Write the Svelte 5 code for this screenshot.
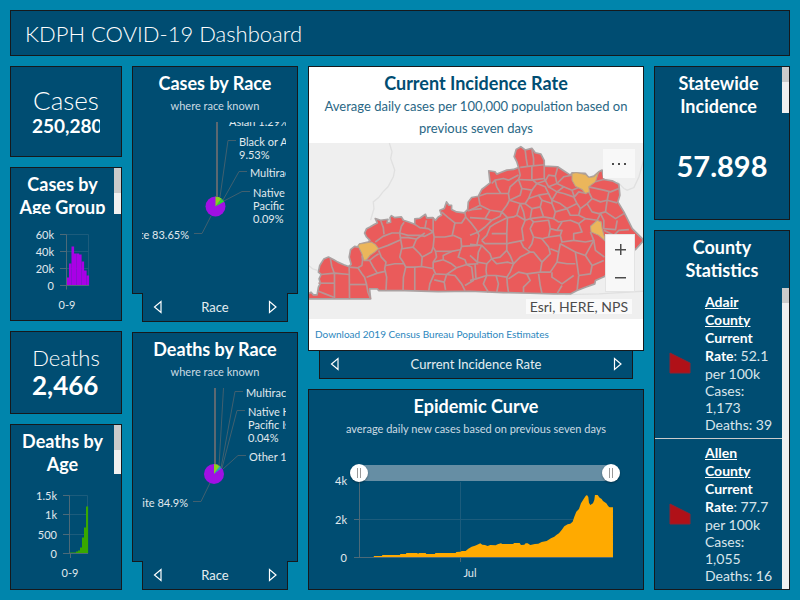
<script>
  const ageCases = [8, 22, 39, 32, 32, 31, 24, 15, 10];
  const ageDeaths = [1, 1, 1, 2, 3, 6, 16, 26, 47];

  const counties = [
    { name: 'Adair', rate: '52.1', cases: '1,173', deaths: '39' },
    { name: 'Allen', rate: '77.7', cases: '1,055', deaths: '16' }
  ];

  const outline =
    'M12 475V460L20 455 27 463 38 463 42 440 48 428 44 415 50 402 42 395 46 375 58 356 72 350 88 358 100 365 118 373 132 378 140 372 134 350 138 328 150 318 162 320 165 311 190 305 196 300 186 290 180 278 186 265 196 260 210 252 218 248 212 235 228 240 250 237 247 248 258 246 256 232 260 226 270 232 290 230 296 240 312 245 330 252 330 236 345 234 362 222 366 233 384 232 392 240 400 230 410 225 405 210 418 205 425 185 432 195 440 195 440 208 455 215 478 218 488 208 490 185 500 172 520 168 530 148 540 140 555 128 551 92 570 95 575 102 585 98 605 90 625 88 640 82 635 65 627 50 633 28 647 20 660 30 680 25 690 38 707 42 717 62 717 78 757 80 775 92 795 105 800 98 840 100 850 112 865 108 880 95 890 90 895 118 920 122 940 132 943 165 937 185 955 215 970 245 980 265 1010 295 1012 303 992 325 960 350 930 380 897 408 870 420 868 430 840 440 815 450 795 460 745 460 675 458 595 456 495 452 400 453 300 450 222 450 218 445 195 445 198 475Z';

  const westLines = [
    '78,355 82,378 90,400', '50,402 90,398 134,402', '90,400 90,475', '42,428 90,428',
    '42,452 62,460 88,470', '134,378 135,475', '135,432 186,432',
    '134,380 160,382 172,400 180,410 186,432 190,455 198,475',
    '172,345 174,360 172,375 160,382', '178,360 195,360 206,380 218,398',
    '195,360 210,348 222,340', '244,392 218,398 186,410',
    '222,330 230,350 244,365 240,385 246,410 244,450',
    '244,375 270,370 298,370 303,380 296,410 295,450', '303,380 330,380 330,450',
    '330,380 350,378 385,384', '212,305 235,288 262,278 285,278', '228,240 236,262 238,282',
    '222,325 250,315 288,298', '285,278 288,298 292,320 285,350 292,360 298,370',
    '285,278 290,258 298,246', '285,278 310,285 345,285 360,288 385,275',
    '288,292 310,292 335,296 325,320 345,340 352,350 350,378', '292,325 325,320',
    '335,296 360,278', '330,252 345,262 370,265 385,275 385,232', '360,265 365,240',
    '385,275 388,290 385,320 380,335 352,350', '388,290 420,290 445,285',
    '385,320 392,332 440,333 465,328', '392,332 395,350 385,365 385,384',
    '385,365 415,358 440,370 455,382', '385,384 392,400 425,402 455,382',
    '388,400 375,430 372,450', '425,402 418,425 422,448', '388,418 418,425',
    '425,402 450,405 470,430 480,450', '410,215 430,232 450,248 442,285',
    '450,248 470,248 482,230 480,216', '488,212 500,208 530,205',
    '445,285 468,295 470,318 465,333', '470,318 520,315',
    '465,333 460,350 480,358 485,372 455,382', '440,333 415,345 415,358',
    '485,372 520,370', '480,435 505,420 500,380 485,372',
    '482,230 500,250 515,270 522,285 515,315'
  ];

  const eastLines = [
    '25,168 50,160 90,160 115,160', '65,130 75,120 100,115 115,120 145,105', '75,120 80,140 92,160',
    '145,82 150,105 145,118 120,140 115,160 118,180', '150,82 180,78 222,74', '165,30 168,55 172,78',
    '185,28 190,55 190,75', '185,78 185,118', '222,75 222,115 185,120 145,118',
    '25,168 30,195 0,210', '30,195 60,210 95,215 110,195 118,180', '60,210 45,235 0,232',
    '45,235 65,240 90,228 95,215 112,232 130,230 140,225',
    '118,180 150,165 155,145 145,118', '118,180 150,190 160,215 165,240 140,225 150,190',
    '155,145 185,150 200,130 185,118', '200,130 225,122 235,105 255,108 262,82',
    '222,115 235,140 260,130 255,108', '185,150 175,175 165,190 150,190',
    '175,175 205,165 235,160 225,140 200,130', '165,190 185,205 210,200 215,180 205,165',
    '235,160 245,180 260,155 235,140', '215,180 245,190 245,180',
    '260,155 280,140 260,130 280,110 305,105', '280,140 305,150 330,140',
    '305,150 312,170 325,155 348,160',
    '245,180 270,190 290,205 320,190 310,170 280,160 260,155',
    '355,155 365,175 350,190 330,205 320,190', '355,140 400,150 420,155 445,145',
    '375,125 385,122 400,118', '365,175 390,185 410,180 415,155',
    '410,180 405,215 385,220 365,215 350,190', '410,180 440,188',
    '330,205 325,225 345,235 380,240 390,220', '405,215 435,235 460,220',
    '390,220 400,240 400,265 435,268 440,240', '400,270 430,285 445,270 475,268',
    '245,190 255,215 250,235 220,230 210,200', '255,215 290,205 300,225 325,225',
    '250,235 265,245 300,240 325,250 345,235', '185,205 180,235 165,240', '180,235 220,230',
    '180,235 190,245 235,240 240,265 235,290 215,295 190,290 180,265 190,245',
    '0,285 25,275 45,260 65,240', '35,300 50,285 60,260 75,250 112,232', '65,280 110,280 112,232',
    '110,310 160,300 155,265 165,240', '35,300 45,310 110,310 110,280',
    '0,312 35,315 60,340 65,355 90,350 110,330 110,310', '35,315 25,335 22,365 50,370 65,355',
    '0,345 22,365', '15,370 18,415 0,420', '18,415 50,405 48,390 50,370',
    '65,355 80,370 112,365 130,370 120,395 110,410 78,405 50,405', '110,330 120,345 130,370',
    '130,370 150,350 180,335 160,320 150,300',
    '180,335 190,335 215,365 210,395 170,400 145,395 130,405 115,415',
    '190,290 185,310 175,325', '215,295 235,320 240,340 215,365', '240,265 260,270 275,245',
    '235,290 270,285 275,270 260,270', '270,285 275,305 310,300 310,280 335,275 325,250',
    '240,325 265,335 270,310', '265,335 260,365 240,395 210,395', '260,365 290,370 315,370',
    '270,310 315,335 320,370 325,405', '310,300 345,305 370,300 360,275', '315,335 345,345 370,300',
    '345,345 365,375 360,400 325,405', '365,375 400,360', '370,300 375,330 402,350',
    '50,405 40,430 55,455', '78,405 85,430 80,455', '110,410 112,435 115,455',
    '170,400 180,420 160,440 160,456', '205,400 210,435 215,458',
    '245,395 245,410 275,430 310,405', '260,460 275,435', '325,405 320,450'
  ];

  const curve =
    'M164 518V516L206 516 207 513 231 513 232 510 285 510 286 507 303 507 304 504 337 504 339 507 342 504 362 504 364 507 390 507 391 504 452 504 454 501 467 500 470 498 482 498 490 491 500 485 510 482 520 478 526 475 532 479 540 480 548 483 556 480 572 481 578 478 588 475 592 477 624 477 628 474 644 474 648 480 658 479 662 475 668 475 676 480 690 477 700 476 710 471 725 468 738 460 748 455 754 450 762 445 770 435 778 424 788 418 796 416 803 410 808 395 814 380 822 372 828 355 836 342 842 333 846 330 850 336 852 353 856 360 864 355 868 345 870 330 878 330 884 338 890 342 894 348 904 355 910 364 914 367 924 367V518Z';
</script>

{#snippet pager(label, wide = false)}
  <nav class="pager" class:wide aria-label={label}>
    <button aria-label="Previous"><svg width="10" height="14" viewBox="0 0 10 14"><path d="M8 1.500v11L1.500 7z" /></svg></button>
    <span>{label}</span>
    <button aria-label="Next"><svg width="10" height="14" viewBox="0 0 10 14"><path d="M2.500 1.500v11L9 7z" /></svg></button>
  </nav>
{/snippet}

<div class="page">
  <header><h1>KDPH COVID-19 Dashboard</h1></header>

  <main>
    <div class="column">
      <section class="panel stat cases">
        <h2>Cases</h2>
        <strong>250,280</strong>
      </section>

      <section class="panel age-cases">
        <div class="scroller">
          <h3>Cases by<br />Age Group</h3>
          <div class="bar"><i class="long"></i></div>
        </div>
        <svg class="chart" viewBox="11 214 110 107" role="img" aria-label="Cases by age group">
          <path class="grid" d="M66 234.500h22.500V286M66 251.500h23M66 268.500h23" />
          {#each ageCases as h, i}
            <rect x={66.5 + i * 2.5} y={285.5 - h} width="2.600" height={h} fill="#a900e6" />
          {/each}
          <path class="axis" d="M60 234.500h6.500v55M60 251.500h6M60 268.500h6M60 285.500h29" />
          <g text-anchor="end">
            <text x="54" y="239">60k</text><text x="54" y="256">40k</text>
            <text x="54" y="273">20k</text><text x="54" y="290">0</text>
          </g>
          <text x="67" y="309" text-anchor="middle">0-9</text>
        </svg>
      </section>

      <section class="panel stat deaths">
        <h2>Deaths</h2>
        <strong>2,466</strong>
      </section>

      <section class="panel age-deaths">
        <div class="scroller">
          <h3>Deaths by<br />Age</h3>
          <div class="bar"><i class="long"></i></div>
        </div>
        <svg class="chart" viewBox="11 474 110 115" role="img" aria-label="Deaths by age">
          <path class="grid" d="M69 495.500h18.500V554M69 514.500h18M69 534.500h18" />
          {#each ageDeaths as h, i}
            <rect x={70 + i * 2} y={553.5 - h} width="2.100" height={h} fill="#38a800" />
          {/each}
          <path class="axis" d="M63 495.500h6.500v58M63 514.500h6M63 534.500h6M63 553.500h25M70.500 553v5" />
          <g text-anchor="end">
            <text x="57" y="500">1.5k</text><text x="57" y="519">1k</text>
            <text x="57" y="539">500</text><text x="57" y="558">0</text>
          </g>
          <text x="70" y="577" text-anchor="middle">0-9</text>
        </svg>
      </section>
    </div>

    <div class="column">
      <div class="stack case-race">
        <section class="panel">
          <h3>Cases by Race</h3>
          <p class="note">where race known</p>
          <svg class="pie" viewBox="142 122 144 160" role="img" aria-label="Cases by race">
            <circle cx="215.500" cy="206.500" r="10" fill="#a010e4" />
            <path d="M215.500 206.500V196.500A10 10 0 0 1 221.500 198.500Z" fill="#8ad41c" />
            <path d="M215.500 206.500L221.500 198.500 224.200 201.500Z" fill="#2bdb2b" />
            <path class="leader main" d="M217 122v75" />
            <path class="leader" d="M236 140.500h-8L220 197M247 171.500h-8L223 200M250 191.500h-8L224 201M194 233.500h8L211 216" />
            <text x="229" y="126">Asian 1.29%</text>
            <text x="239" y="146">Black or African American</text><text x="239" y="159">9.53%</text>
            <text x="250" y="177">Multiracial 2.3%</text>
            <text x="253" y="197">Native</text><text x="253" y="210">Pacific</text><text x="253" y="223">0.09%</text>
            <text x="189" y="239" text-anchor="end">White 83.65%</text>
          </svg>
        </section>
        {@render pager('Race')}
      </div>

      <div class="stack death-race">
        <section class="panel">
          <h3>Deaths by Race</h3>
          <p class="note">where race known</p>
          <svg class="pie" viewBox="142 388 144 160" role="img" aria-label="Deaths by race">
            <circle cx="214" cy="474" r="10" fill="#a010e4" />
            <path d="M214 474V464A10 10 0 0 1 220 466Z" fill="#8ad41c" />
            <path d="M214 474L220 466 221.500 468Z" fill="#12b8b0" />
            <path class="leader main" d="M215 388v76" />
            <path class="leader" d="M223.500 388L219 466M243 391.500h-8L221 468M245 410.500h-8L222 468M246 455.500h-8L223 469M193 501.500h8L210 483" />
            <text x="246" y="397">Multiracial 1%</text>
            <text x="248" y="416">Native Hawaiian</text><text x="248" y="429">Pacific Islander</text><text x="248" y="442">0.04%</text>
            <text x="249" y="461">Other 1.5%</text>
            <text x="188" y="507" text-anchor="end">White 84.9%</text>
          </svg>
        </section>
        {@render pager('Race')}
      </div>
    </div>

    <div class="column">
      <div class="stack incidence">
        <section class="panel light">
          <h3>Current Incidence Rate</h3>
          <p>Average daily cases per 100,000 population based on<br />previous seven days</p>
          <div class="map">
            <svg viewBox="12 9 1002 525" preserveAspectRatio="xMidYMid slice" role="img" aria-label="Map of Kentucky counties">
              <path class="river" d="M254 9L262 35 258 55 270 90 266 110 250 140 235 155 222 172 206 185 208 205 198 240M12 375L25 385 40 390" />
              <path class="river" d="M935 125L955 145 965 150 985 142 1000 110 1014 60" />
              <path class="river" d="M780 462L880 460 1014 452" />
              <path class="state" d={outline} />
              <g class="lines">
                {#each westLines as points}<polyline {points} />{/each}
                <g transform="translate(495 0)">
                  {#each eastLines as points}<polyline {points} />{/each}
                </g>
              </g>
              <g class="low">
                <path d="M160 316L165 311 200 305 212 312 222 325 210 335 196 345 186 358 178 360 172 340Z" />
                <path d="M800 100L812 97 840 103 850 112 865 110 880 95 870 125 850 140 852 155 840 160 830 148 810 138 800 120Z" />
                <path d="M875 240L887 245 890 265 897 290 897 300 880 285 857 275 855 258Z" />
              </g>
            </svg>
            <button class="more" aria-label="More map tools"><svg width="16" height="4" viewBox="0 0 16 4"><path d="M1 1h2v2H1zM7 1h2v2H7zM13 1h2v2h-2z" /></svg></button>
            <div class="zoom">
              <button aria-label="Zoom in"><svg width="11" height="11" viewBox="0 0 11 11"><path d="M5 0h1.500v5H11v1.500H6.500V11H5V6.500H0V5h5z" /></svg></button>
              <button aria-label="Zoom out"><svg width="11" height="11" viewBox="0 0 11 11"><path d="M0 5h11v1.500H0z" /></svg></button>
            </div>
            <span class="credit">Esri, HERE, NPS</span>
          </div>
          <div class="source"><a href="#census">Download 2019 Census Bureau Population Estimates</a></div>
        </section>
        {@render pager('Current Incidence Rate', true)}
      </div>

      <section class="panel epidemic">
        <h3>Epidemic Curve</h3>
        <p class="note">average daily new cases based on previous seven days</p>
        <div class="slider">
          <input type="range" min="0" max="100" value="0" aria-label="Start date" />
          <input type="range" min="0" max="100" value="100" aria-label="End date" />
        </div>
        <svg class="chart" viewBox="309 482 334 107" role="img" aria-label="Epidemic curve">
          <path class="grid" d="M359 519.500h254M460.500 482v75" />
          <path fill="#ffaa00" d={curve} transform="translate(305 385) scale(.3333)" />
          <path class="axis" d="M359.500 482v75.500M354 519.500h5M354 557.500h259M460.500 557v5" />
          <g text-anchor="end">
            <text x="347" y="485">4k</text><text x="347" y="524">2k</text><text x="347" y="562">0</text>
          </g>
          <text x="470" y="577" text-anchor="middle">Jul</text>
        </svg>
      </section>
    </div>

    <div class="column">
      <section class="panel statewide">
        <div class="scroller">
          <h3>Statewide<br />Incidence</h3>
          <div class="bar"><i></i></div>
        </div>
        <strong>57.898</strong>
      </section>

      <section class="panel county">
        <h3>County<br />Statistics</h3>
        <div class="listing">
          <ul>
            {#each counties as c}
              <li>
                <svg width="22" height="22" viewBox="0 0 22 22"><path d="M1 1l20 10v10H1z" /></svg>
                <div>
                  <b><u>{c.name}<br />County</u><br />Current<br />Rate</b>: {c.rate}<br />per 100k<br />Cases:<br />{c.cases}<br />Deaths: {c.deaths}
                </div>
              </li>
            {/each}
          </ul>
          <div class="bar"><i></i></div>
        </div>
      </section>
    </div>
  </main>
</div>

<style>
  :global(body) { margin: 0; }
  .page {
    box-sizing: border-box;
    min-height: 100vh;
    padding: 10px;
    display: flex;
    flex-direction: column;
    gap: 10px;
    background: #0085ac;
    color: #fff;
    font-family: Lato, 'Open Sans', sans-serif;
  }
  h1, h2, h3, p, ul { margin: 0; padding: 0; }
  header, .panel {
    box-sizing: border-box;
    border: 1px solid #16191c;
    background: #004d72;
  }
  header { height: 46px; padding: 0 14px; display: flex; align-items: center; }
  h1 { font-size: 22px; font-weight: 300; }
  main {
    flex: 1;
    display: grid;
    grid-template-columns: 112fr 166fr 336fr 136fr;
    gap: 10px;
  }
  .column { display: flex; flex-direction: column; gap: 10px; min-width: 0; }
  .panel { overflow: hidden; }
  h3 { padding-top: 5px; font-size: 18px; line-height: 23px; font-weight: 700; text-align: center; }
  p { text-align: center; }
  .note { font-size: 11px; line-height: 22px; color: #ccdbe3; }
  svg { display: block; }
  text { font-size: 11px; fill: #e0e9ee; }
  .chart { width: 100%; overflow: visible; }
  .grid { fill: none; stroke: #1c5c7c; }
  .axis { fill: none; stroke: #4d6a78; }
  .leader { fill: none; stroke: #41606f; }
  .main { stroke: #5c6871; stroke-width: 2; }

  .stat { display: flex; flex-direction: column; align-items: center; justify-content: center; }
  .stat strong { width: 68px; overflow: hidden; }
  .cases { flex: 90 1 0; }
  .deaths { flex: 82 1 0; }
  .cases h2 { font-size: 26px; line-height: 30px; font-weight: 300; }
  .cases strong { font-size: 19px; line-height: 22px; }
  .deaths h2 { font-size: 22px; line-height: 26px; font-weight: 300; }
  .deaths strong { font-size: 26px; line-height: 28px; }
  .age-cases { flex: 155 1 0; }
  .age-deaths { flex: 167 1 0; }
  .age-deaths .scroller { height: 49px; }

  .scroller { display: flex; height: 46px; overflow: hidden; }
  .scroller h3 { flex: 1; white-space: nowrap; }
  .bar { flex: none; width: 7px; background: #f0f0f0; }
  .bar i { display: block; height: 15px; background: #cbcbcb; }
  .bar .long { height: 25px; }

  .stack { display: flex; flex-direction: column; }
  .stack .panel { flex: 1; }
  .case-race { flex: 255 1 0; }
  .death-race { flex: 258 1 0; }
  .pie { width: calc(100% - 20px); margin-left: 9px; margin-top: 5px; }
  .pager {
    position: relative;
    box-sizing: border-box;
    height: 29px;
    margin: -1px 10px 0;
    padding: 0 10px;
    border: 1px solid #16191c;
    border-top: 0;
    background: #004d72;
    display: flex;
    align-items: center;
    justify-content: space-between;
    font-size: 13px;
    color: #e5edf1;
  }
  .pager.wide { margin: 0 11px; height: 28px; }
  .pager button { padding: 0; border: 0; background: none; }
  .pager path { fill: none; stroke: #fff; stroke-width: 1.2; }

  .incidence { flex: 314 1 0; }
  .light { background: #fff; color: #004d72; display: flex; flex-direction: column; }
  .light p { font-size: 13px; line-height: 22px; color: #2a6785; padding-bottom: 4px; }
  .map { position: relative; flex: 175; min-height: 0; background: #efefef; }
  .map > svg { position: absolute; width: 100%; height: 100%; }
  .river { fill: none; stroke: #e0e0e0; stroke-width: 4; }
  .state { fill: #ea5b5b; stroke: #aaa2a2; stroke-width: 5; stroke-linejoin: round; }
  .lines { fill: none; stroke: #b79696; stroke-width: 5; stroke-linejoin: round; }
  .low { fill: #ebb65b; stroke: #b5a28e; stroke-width: 3; }
  .more, .zoom, .credit { position: absolute; }
  .map button { border: 0; padding: 0; background: #f8f8f8; display: flex; align-items: center; justify-content: center; }
  .map button path { fill: #4c4c4c; }
  .more { top: 6px; right: 8px; width: 32px; height: 29px; }
  .zoom { top: 91px; right: 8px; border: 1px solid #e4e4e4; }
  .zoom button { width: 28px; height: 28px; }
  .credit { right: 11px; bottom: 5px; padding: 0 4px; font-size: 14px; line-height: 15px; color: #4c4c4c; background: #fafafa; }
  .source { flex: 31; display: flex; align-items: center; padding-left: 6px; font-size: 10px; }
  .source a { color: #2b86bd; text-decoration: none; }

  .epidemic { flex: 200 1 0; }
  .slider {
    position: relative;
    height: 18px;
    margin: 24px 23px 0 41px;
    background: linear-gradient(#668ea4, #668ea4) center / calc(100% - 18px) 16px no-repeat;
  }
  .slider input {
    position: absolute;
    width: 100%;
    height: 18px;
    margin: 0;
    appearance: none;
    background: none;
    pointer-events: none;
  }
  .slider input::-webkit-slider-thumb {
    appearance: none;
    pointer-events: auto;
    width: 18px;
    height: 18px;
    border-radius: 50%;
    background:
      linear-gradient(90deg, #999 1px, transparent 1px 3px, #999 3px) center / 4px 10px no-repeat,
      #fff;
    box-shadow: 0 1px 2px #0005;
  }

  .statewide { flex: 153 1 0; }
  .county { flex: 361 1 0; display: flex; flex-direction: column; }
  .statewide strong { display: block; margin-top: 36px; text-align: center; font-size: 29px; line-height: 34px; }
  .listing { flex: 1; margin-top: 6px; display: flex; }
  ul { flex: 1; list-style: none; }
  li { display: flex; align-items: center; gap: 14px; padding: 5px 0 5px 14px; font-size: 14px; line-height: 17px; white-space: nowrap; color: #d9e5eb; }
  li + li { border-top: 1px solid #cbcbcb; }
  li b { line-height: 18px; color: #fff; }
  li svg { flex: none; }
  li path { fill: #b01118; stroke: #8e2230; }
</style>
